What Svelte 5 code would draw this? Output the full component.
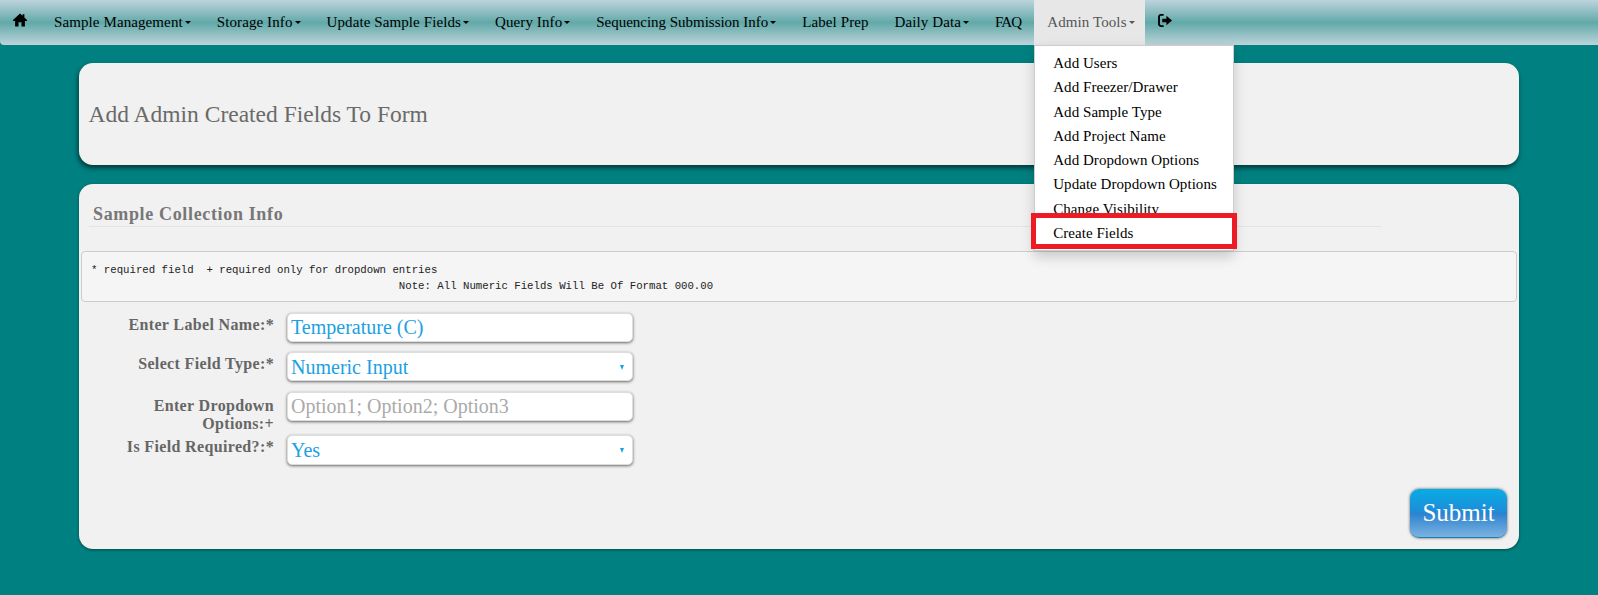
<script>
  const navItems = [
    { label: 'Sample Management', caret: true },
    { label: 'Storage Info', caret: true },
    { label: 'Update Sample Fields', caret: true },
    { label: 'Query Info', caret: true },
    { label: 'Sequencing Submission Info', caret: true, tight: true },
    { label: 'Label Prep' },
    { label: 'Daily Data', caret: true },
    { label: 'FAQ', faq: true }
  ];

  const adminLinks = [
    'Add Users',
    'Add Freezer/Drawer',
    'Add Sample Type',
    'Add Project Name',
    'Add Dropdown Options',
    'Update Dropdown Options',
    'Change Visibility',
    'Create Fields'
  ];

  const note = `* required field  + required only for dropdown entries
                                                Note: All Numeric Fields Will Be Of Format 000.00`;
</script>

<nav class="navbar">
  <a class="nav-link home" href="#home" aria-label="Home">
    <svg width="14" height="14" viewBox="0 0 16 16" fill="#000">
      <path d="M8 0.5 L11 3.2 V1.5 H13 V5 L16 8 V9 H13.6 V15.5 H9.7 V10.6 H6.3 V15.5 H2.4 V9 H0 V8 Z" />
    </svg>
  </a>
  {#each navItems as item}
    <a class="nav-link" class:tight={item.tight} class:faq={item.faq} href="#item">{item.label}{#if item.caret}<span class="caret"></span>{/if}</a>
  {/each}
  <div class="admin">
    <a class="nav-link active" href="#admin">Admin Tools<span class="caret"></span></a>
    <ul class="dropdown">
      {#each adminLinks as link}
        <li>{link}</li>
      {/each}
    </ul>
    <div class="highlight"></div>
  </div>
  <a class="nav-link logout" href="#logout" aria-label="Log out">
    <svg width="15" height="13" viewBox="0 0 16 14" fill="#000">
      <path d="M6 0 H3.2 C1.4 0 0 1.4 0 3.2 V10.8 C0 12.6 1.4 14 3.2 14 H6 V12 H3.4 C2.6 12 2 11.4 2 10.6 V3.4 C2 2.6 2.6 2 3.4 2 H6 Z" />
      <path d="M4.5 5 H9 V2 L15 7 L9 12 V9 H4.5 Z" />
    </svg>
  </a>
</nav>

<main class="page">
  <section class="panel title-panel">
    <h2>Add Admin Created Fields To Form</h2>
  </section>

  <section class="panel form-panel">
    <h3 class="legend">Sample Collection Info</h3>
    <pre>{note}</pre>

    <form class="fields">
      <label for="name">Enter Label Name:*</label>
      <input id="name" class="control" value="Temperature (C)" />

      <label for="type">Select Field Type:*</label>
      <div id="type" class="control select">Numeric Input<span class="arrow"></span></div>

      <label class="wrapped" for="options">Enter Dropdown Options:+</label>
      <input id="options" class="control" placeholder="Option1; Option2; Option3" />

      <label for="required">Is Field Required?:*</label>
      <div id="required" class="control select last">Yes<span class="arrow"></span></div>
    </form>

    <div class="actions">
      <button class="submit" type="button">Submit</button>
    </div>
  </section>
</main>

<style>
  :global(body) {
    background: #008080;
    font-family: "Liberation Serif", serif;
    height: 595px;
    overflow: hidden;
  }
  .navbar {
    display: flex;
    height: 45px;
    border-bottom-left-radius: 4px;
    background: linear-gradient(to bottom, #bdd4dc 0%, #62a9a9 50%, #bdd4da 100%);
  }
  .nav-link {
    display: flex;
    align-items: center;
    height: 45px;
    padding: 0 13px;
    box-sizing: border-box;
    color: #000;
    font-size: 15px;
    letter-spacing: 0.1px;
    text-decoration: none;
    white-space: nowrap;
  }
  .tight {
    letter-spacing: -0.02px;
  }
  .faq {
    letter-spacing: -0.9px;
  }
  .home {
    padding-left: 13px;
    padding-right: 14px;
    padding-bottom: 5px;
  }
  .logout {
    padding-bottom: 5px;
  }
  .caret {
    width: 0;
    height: 0;
    margin-left: 2px;
    border-top: 3px solid currentColor;
    border-left: 3px solid transparent;
    border-right: 3px solid transparent;
  }
  .admin {
    position: relative;
  }
  .active {
    width: 111px;
    background: #e7e7e7;
    color: #555;
  }
  .dropdown {
    position: absolute;
    top: 45px;
    left: 0;
    width: 200px;
    height: 206px;
    margin: 0;
    padding: 5px 0 0;
    box-sizing: border-box;
    list-style: none;
    overflow: hidden;
    background: #fff;
    border: 1px solid #ccc;
    box-shadow: 0 6px 12px rgba(0, 0, 0, 0.18);
    z-index: 2;
  }
  .dropdown li {
    height: 24.3px;
    padding-left: 18px;
    font-size: 15px;
    line-height: 24px;
    letter-spacing: 0.05px;
    color: #000;
    white-space: nowrap;
  }
  .highlight {
    position: absolute;
    top: 213px;
    left: -3px;
    width: 206px;
    height: 36px;
    box-sizing: border-box;
    border: 5px solid #ed1c24;
    z-index: 3;
  }
  .page {
    display: flex;
    flex-direction: column;
    gap: 19px;
    width: 1440px;
    margin-left: 79px;
    padding-top: 18px;
  }
  .panel {
    box-sizing: border-box;
    background: #f1f1f1;
    border-radius: 14px;
  }
  .title-panel {
    display: flex;
    align-items: center;
    height: 102px;
    padding: 0 9.5px;
    box-shadow: -1px 3px 5px #00393a;
  }
  .title-panel h2 {
    margin: 0;
    font-size: 23.5px;
    font-weight: 400;
    color: #6a6a6a;
  }
  .form-panel {
    height: 365px;
    padding: 21px 2px 0;
    box-shadow: 0 1px 3px #00494a;
  }
  .legend {
    width: 1292px;
    height: 22px;
    margin: 0 0 24px 8px;
    padding: 0 0 0 4px;
    box-sizing: border-box;
    border-bottom: 1px solid #e4e4e4;
    font-size: 18px;
    line-height: 18px;
    letter-spacing: 0.65px;
    color: #777;
  }
  pre {
    height: 51px;
    margin: 0;
    padding: 10px 9px 0;
    box-sizing: border-box;
    font-family: "Liberation Mono", monospace;
    font-size: 10.7px;
    line-height: 16px;
    color: #222;
    background: #f5f5f5;
    border: 1px solid #ccc;
    border-radius: 4px;
  }
  .fields {
    display: grid;
    grid-template-columns: 193px 346px;
    column-gap: 13px;
    margin: 11px 0 0 0;
    align-items: start;
  }
  .fields label {
    padding: 3px 0 4px 30px;
    text-align: right;
    font-size: 16px;
    font-weight: 700;
    line-height: 18px;
    letter-spacing: 0.35px;
    color: #666;
  }
  .fields .wrapped {
    padding-top: 5px;
    padding-bottom: 2px;
  }
  .control {
    position: relative;
    display: block;
    width: 346px;
    height: 29px;
    margin-bottom: 10px;
    padding: 0 3px;
    box-sizing: border-box;
    font-family: "Liberation Serif", serif;
    font-size: 20px;
    line-height: 29px;
    color: #1ba1e2;
    background: #fff;
    border: 1px solid #ddd;
    border-radius: 5px;
    box-shadow: 0 1px 3px #666;
    outline: none;
  }
  .control::placeholder {
    color: #aaa;
    opacity: 1;
  }
  .select {
    margin-bottom: 11px;
  }
  .last {
    height: 30px;
  }
  .arrow {
    position: absolute;
    top: 12px;
    right: 8px;
    border-top: 5px solid #1ba1e2;
    border-left: 2.5px solid transparent;
    border-right: 2.5px solid transparent;
  }
  .actions {
    display: flex;
    justify-content: flex-end;
    padding: 13px 10px 0 0;
  }
  .submit {
    width: 97px;
    height: 49px;
    padding: 0;
    font-family: "Liberation Serif", serif;
    font-size: 25px;
    color: #fff;
    background: linear-gradient(to bottom, #08ace4 0%, #1f8cd9 48%, #2a82cf 50%, #7db2e0 100%);
    border: 0;
    border-bottom: 1px solid #1a7fb8;
    border-radius: 9px;
    box-shadow: 0 0 3px #555;
  }
</style>
